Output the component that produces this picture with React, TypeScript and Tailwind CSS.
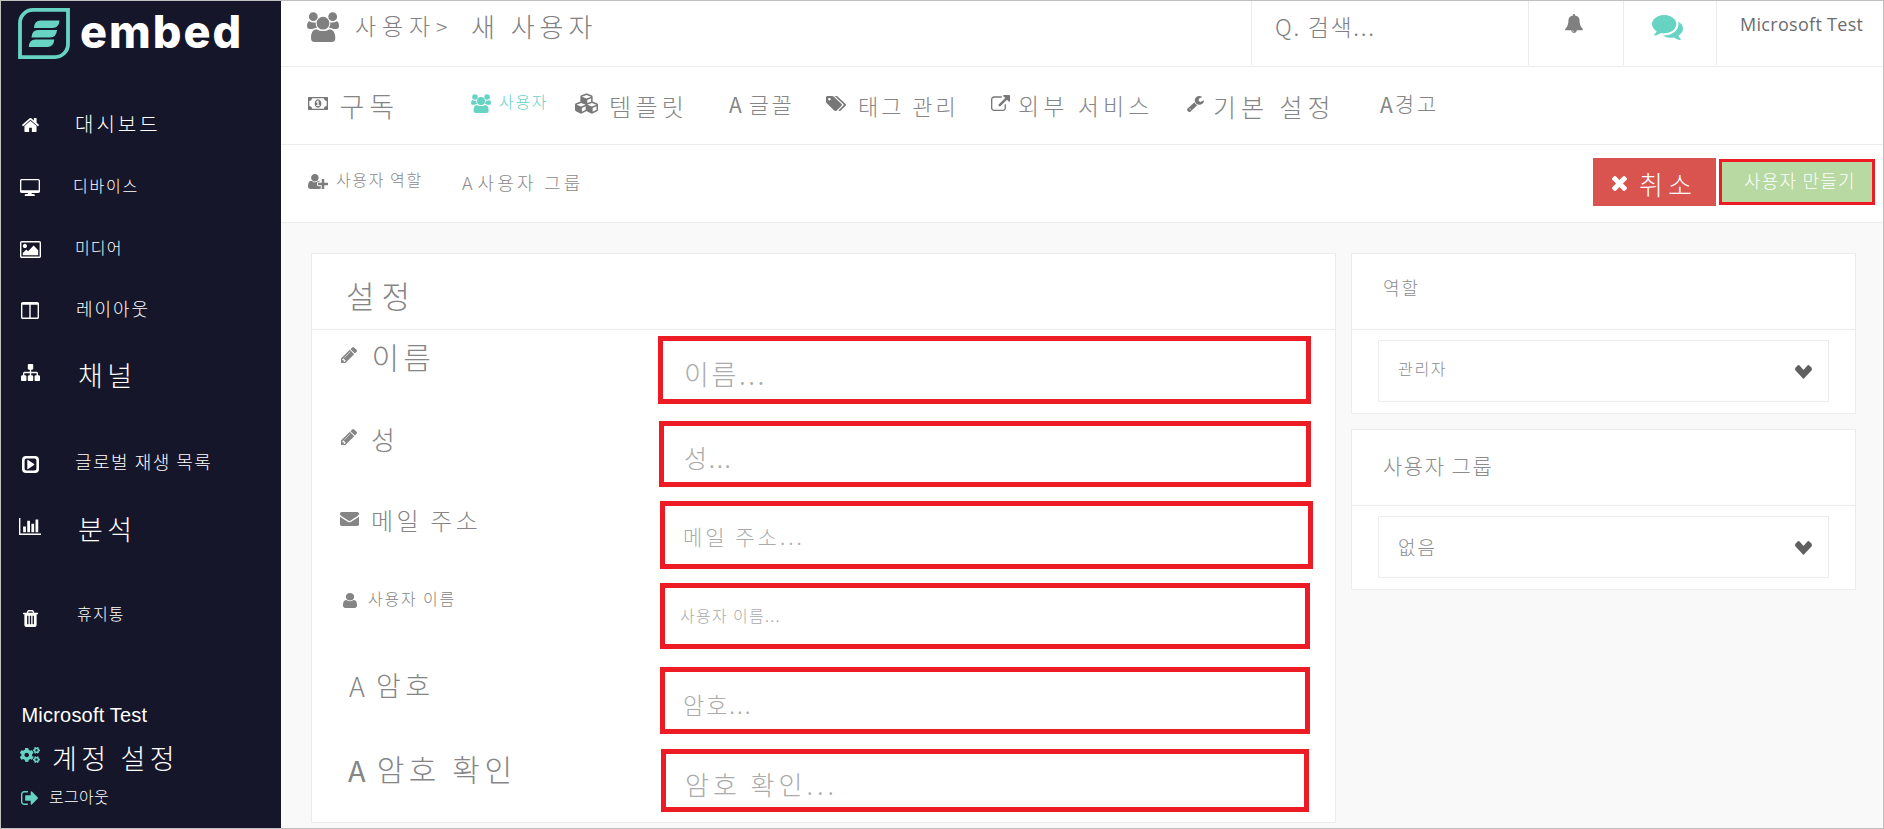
import React from "react";
import { FaCogs, FaCubes } from "react-icons/fa";

type Glyph = { box: string; d: string };

const glyphs: Record<string, Glyph> = {
  users: {
    box: "0 0 32 30",
    d: "M1.900 4.700a4.400 4.400 0 1 0 8.800 0a4.400 4.400 0 1 0-8.800 0zM21.300 4.700a4.400 4.400 0 1 0 8.800 0a4.400 4.400 0 1 0-8.800 0zM9.600 11.200a6.400 6.400 0 1 0 12.800 0a6.400 6.400 0 1 0-12.800 0zM2.500 9.300Q4 10.500 6.500 10.500T8.600 10.200Q8.300 13.500 10 15.800Q7 16.100 5.500 17H2.300Q0 16.800 0 14.500Q0 9.800 2.500 9.300zM29.500 9.300Q28 10.500 25.500 10.500T23.400 10.200Q23.700 13.500 22 15.800Q25 16.100 26.500 17H29.700Q32 16.800 32 14.500Q32 9.800 29.500 9.300zM9.500 17.200Q12.500 19.100 16 19.100T22.500 17.200Q28.300 17.500 28.300 26.500Q28.200 30 24.500 30H7.700Q4.200 30 4 26.500Q3.800 17.500 9.500 17.200z",
  },
  home: {
    box: "89 253 1614 1283",
    d: "M1472 992v480q0 26-19 45t-45 19h-384v-384h-256v384h-384q-26 0-45-19t-19-45v-480q0-1 .5-3t.5-3l575-474 575 474q1 2 1 6zm223-69l-62 74q-8 9-21 11h-3q-13 0-21-7l-692-577-692 577q-12 8-24 7-13-2-21-11l-62-74q-8-10-7-23.5t11-21.5l719-599q32-26 76-26t76 26l244 204v-195q0-14 9-23t23-9h192q14 0 23 9t9 23v408l219 182q10 8 11 21.5t-7 23.5z",
  },
  desktop: {
    box: "-64 0 1920 1664",
    d: "M1728 1070v-910q0-13-9.5-22.5t-22.5-9.5h-1600q-13 0-22.5 9.5t-9.5 22.5v910q0 13 9.5 22.5t22.5 9.5h1600q13 0 22.5-9.5t9.5-22.5zm128-910v1040q0 66-47 113t-113 47h-640v120h190q60 0 90 30t30 64-19 64-45 26h-856q-26 0-45-26t-19-64 30-64 90-30h190v-120h-606q-66 0-113-47t-47-113v-1040q0-66 47-113t113-47h1600q66 0 113 47t47 113z",
  },
  picture: {
    box: "-64 128 1920 1536",
    d: "M576 576q0 80-56 136t-136 56-136-56-56-136 56-136 136-56 136 56 56 136zm1024 384v448h-1408v-192l320-320 160 160 512-512zm96-704h-1600q-13 0-22.5 9.5t-9.5 22.5v1216q0 13 9.5 22.5t22.5 9.5h1600q13 0 22.5-9.5t9.5-22.5v-1216q0-13-9.5-22.5t-22.5-9.5zm160 32v1216q0 66-47 113t-113 47h-1600q-66 0-113-47t-47-113v-1216q0-66 47-113t113-47h1600q66 0 113 47t47 113z",
  },
  columns: {
    box: "0 0 1664 1536",
    d: "M160 1408h608v-1152h-640v1120q0 13 9.5 22.5t22.5 9.5zm1376-32v-1120h-640v1152h608q13 0 22.5-9.5t9.5-22.5zm128-1216v1216q0 66-47 113t-113 47h-1344q-66 0-113-47t-47-113v-1216q0-66 47-113t113-47h1344q66 0 113 47t47 113z",
  },
  sitemap: {
    box: "0 128 1792 1536",
    d: "M1792 1248v320q0 40-28 68t-68 28h-320q-40 0-68-28t-28-68v-320q0-40 28-68t68-28h96v-192h-512v192h96q40 0 68 28t28 68v320q0 40-28 68t-68 28h-320q-40 0-68-28t-28-68v-320q0-40 28-68t68-28h96v-192h-512v192h96q40 0 68 28t28 68v320q0 40-28 68t-68 28h-320q-40 0-68-28t-28-68v-320q0-40 28-68t68-28h96v-192q0-52 38-90t90-38h512v-192h-96q-40 0-68-28t-28-68v-320q0-40 28-68t68-28h320q40 0 68 28t28 68v320q0 40-28 68t-68 28h-96v192h512q52 0 90 38t38 90v192h96q40 0 68 28t28 68z",
  },
  play: {
    box: "0 0 17 17",
    d: "M4 0h9a4 4 0 0 1 4 4v9a4 4 0 0 1-4 4H4a4 4 0 0 1-4-4V4a4 4 0 0 1 4-4zm.5 2.6A1.9 1.9 0 0 0 2.6 4.5v8a1.9 1.9 0 0 0 1.9 1.9h8a1.9 1.9 0 0 0 1.9-1.9v-8a1.9 1.9 0 0 0-1.9-1.9zM5.3 4.2q0-.7.8-.3l6 4q.7.6 0 1.2l-6 4q-.8.4-.8-.3z",
  },
  chart: {
    box: "0 128 2048 1536",
    d: "M640 896v512h-256v-512h256zm384-512v1024h-256v-1024h256zm1024 1152v128h-2048v-1536h128v1408h1920zm-640-896v768h-256v-768h256zm384-384v1152h-256v-1152h256z",
  },
  trash: {
    box: "192 128 1408 1536",
    d: "M704 1376v-704q0-14-9-23t-23-9h-64q-14 0-23 9t-9 23v704q0 14 9 23t23 9h64q14 0 23-9t9-23zm256 0v-704q0-14-9-23t-23-9h-64q-14 0-23 9t-9 23v704q0 14 9 23t23 9h64q14 0 23-9t9-23zm256 0v-704q0-14-9-23t-23-9h-64q-14 0-23 9t-9 23v704q0 14 9 23t23 9h64q14 0 23-9t9-23zm-544-992h448l-48-117q-7-9-17-11h-317q-10 2-17 11zm928 32v64q0 14-9 23t-23 9h-96v948q0 83-47 143.5t-113 60.5h-832q-66 0-113-58.5t-47-141.5v-952h-96q-14 0-23-9t-9-23v-64q0-14 9-23t23-9h309l70-167q15-37 54-63t79-26h320q40 0 79 26t54 63l70 167h309q14 0 23 9t9 23z",
  },
  signout: {
    box: "64 256 1568 1280",
    d: "M704 1440q0 4 1 20t.5 26.5-3 23.5-10 19.5-20.5 6.5h-320q-119 0-203.5-84.5t-84.5-203.5v-704q0-119 84.5-203.5t203.5-84.5h320q13 0 22.5 9.5t9.5 22.5q0 4 1 20t.5 26.5-3 23.5-10 19.5-20.5 6.5h-320q-66 0-113 47t-47 113v704q0 66 47 113t113 47h312l11.5 1 11.5 3 8 5.5 7 9 2 13.5zm928-544q0 26-19 45l-544 544q-19 19-45 19t-45-19-19-45v-288h-448q-26 0-45-19t-19-45v-384q0-26 19-45t45-19h448v-288q0-26 19-45t45-19 45 19l544 544q19 19 19 45z",
  },
  money: {
    box: "0 256 1920 1280",
    d: "M768 1152h384v-96h-128v-448h-114l-148 137 77 80q42-37 55-57h2v288h-128v96zm512-256q0 70-21 142t-59.5 134-101.5 101-138 39-138-39-101.5-101-59.5-134-21-142 21-142 59.5-134 101.5-101 138-39 138 39 101.5 101 59.5 134 21 142zm512 256v-512q-106 0-181-75t-75-181h-1152q0 106-75 181t-181 75v512q106 0 181 75t75 181h1152q0-106 75-181t181-75zm128-832v1152q0 26-19 45t-45 19h-1792q-26 0-45-19t-19-45v-1152q0-26 19-45t45-19h1792q26 0 45 19t19 45z",
  },
  tags: {
    box: "0 128 1899 1515",
    d: "M448 448q0-53-37.5-90.5t-90.5-37.5-90.5 37.5-37.5 90.5 37.5 90.5 90.5 37.5 90.5-37.5 37.5-90.5zm1067 576q0 53-37 90l-491 492q-39 37-91 37-53 0-90-37l-715-716q-38-37-64.5-101t-26.5-117v-416q0-52 38-90t90-38h416q53 0 117 26.5t102 64.5l715 714q37 39 37 91zm384 0q0 53-37 90l-491 492q-39 37-91 37-36 0-59-14t-53-45l470-470q37-37 37-90 0-52-37-91l-715-714q-38-38-102-64.5t-117-26.5h224q53 0 117 26.5t102 64.5l715 714q37 39 37 91z",
  },
  external: {
    box: "0 0 1792 1536",
    d: "M1408 928v320q0 119-84.5 203.5t-203.5 84.5h-832q-119 0-203.5-84.5t-84.5-203.5v-832q0-119 84.5-203.5t203.5-84.5h704q14 0 23 9t9 23v64q0 14-9 23t-23 9h-704q-66 0-113 47t-47 113v832q0 66 47 113t113 47h832q66 0 113-47t47-113v-320q0-14 9-23t23-9h64q14 0 23 9t9 23zm384-864v512q0 26-19 45t-45 19-45-19l-176-176-652 652q-10 10-23 10t-23-10l-114-114q-10-10-10-23t10-23l652-652-176-176q-19-19-19-45t19-45 45-19h512q26 0 45 19t19 45z",
  },
  wrench: {
    box: "85 128 1641 1643",
    d: "M448 1472q0-26-19-45t-45-19-45 19-19 45 19 45 45 19 45-19 19-45zm644-420l-682 682q-37 37-90 37-52 0-91-37l-106-108q-38-36-38-90 0-53 38-91l681-681q39 98 114.5 173.5t173.5 114.5zm634-435q0 39-23 106-47 134-164.5 217.5t-258.5 83.5q-185 0-316.5-131.5t-131.5-316.5 131.5-316.5 316.5-131.5q58 0 121.5 16.5t107.5 46.5q16 11 16 28t-16 28l-293 169v224l193 107q5-3 79-48.5t135.5-81 70.5-35.5q15 0 23.5 10t8.5 25z",
  },
  userPlus: {
    box: "0 128 2048 1536",
    d: "M704 896q-159 0-271.5-112.5t-112.5-271.5 112.5-271.5 271.5-112.5 271.5 112.5 112.5 271.5-112.5 271.5-271.5 112.5zm960 128h352q13 0 22.5 9.5t9.5 22.5v192q0 13-9.5 22.5t-22.5 9.5h-352v352q0 13-9.5 22.5t-22.5 9.5h-192q-13 0-22.5-9.5t-9.5-22.5v-352h-352q-13 0-22.5-9.5t-9.5-22.5v-192q0-13 9.5-22.5t22.5-9.5h352v-352q0-13 9.5-22.5t22.5-9.5h192q13 0 22.5 9.5t9.5 22.5v352zm-736 224q0 52 38 90t90 38h256v238q-68 50-171 50h-874q-121 0-194-69t-73-190q0-53 3.5-103.5t14-109 26.5-108.5 43-97.5 62-81 85.5-53.5 111.5-20q19 0 39 17 79 61 154.5 91.5t164.5 30.5 164.5-30.5 154.5-91.5q20-17 39-17 132 0 217 96h-223q-52 0-90 38t-38 90v192z",
  },
  times: {
    box: "302 366 1188 1188",
    d: "M1490 1322q0 40-28 68l-136 136q-28 28-68 28t-68-28l-294-294-294 294q-28 28-68 28t-68-28l-136-136q-28-28-28-68t28-68l294-294-294-294q-28-28-28-68t28-68l136-136q28-28 68-28t68 28l294 294 294-294q28-28 68-28t68 28l136 136q28 28 28 68t-28 68l-294 294 294 294q28 28 28 68z",
  },
  bell: {
    box: "64 0 1664 1792",
    d: "M912 1696q0-16-16-16-59 0-101.5-42.5t-42.5-101.5q0-16-16-16t-16 16q0 73 51.5 124.5t124.5 51.5q16 0 16-16zm816-288q0 52-38 90t-90 38h-448q0 106-75 181t-181 75-181-75-75-181h-448q-52 0-90-38t-38-90q50-42 91-88t85-119.5 74.5-158.5 50-206 19.5-260q0-152 117-282.5t307-158.5q-8-19-8-39 0-40 28-68t68-28 68 28 28 68q0 20-8 39 190 28 307 158.5t117 282.5q0 139 19.5 260t50 206 74.5 158.5 85 119.5 91 88z",
  },
  comments: {
    box: "0 256 1792 1408",
    d: "M1408 768q0 139-94 257t-256.5 186.5-353.5 68.5q-86 0-176-16-124 88-278 128-36 9-86 16h-3q-11 0-20.5-8t-11.5-21q-1-3-1-6.5t.5-6.5 2-6l2.5-5 3.5-5.5 4-5 4.5-5 4-4.5q5-6 23-25t26-29.5 22.5-29 25-38.5 20.5-44q-124-72-195-177t-71-224q0-139 94-257t256.5-186.5 353.5-68.5 353.5 68.5 256.5 186.5 94 257zm384 256q0 120-71 224.5t-195 176.5q10 24 20.5 44t25 38.5 22.5 29 26 29.5 23 25q1 1 4 4.5t4.5 5 4 5 3.5 5.5l2.5 5 2 6 .5 6.5-1 6.5q-3 14-13 22t-22 7q-50-7-86-16-154-40-278-128-90 16-176 16-271 0-472-132 58 4 88 4 161 0 309-45t264-129q125-92 192-212t67-254q0-77-23-152 129 71 204 178t75 230z",
  },
  pencil: {
    box: "128 149 1515 1515",
    d: "M491 1536l91-91-235-235-91 91v107h128v128h107zm523-928q0-22-22-22-10 0-17 7l-542 542q-7 7-7 17 0 22 22 22 10 0 17-7l542-542q7-7 7-17zm-54-192l416 416-832 832h-416v-416zm683 96q0 53-37 90l-166 166-416-416 166-165q36-38 90-38 53 0 91 38l235 234q37 39 37 91z",
  },
  envelope: {
    box: "0 256 1792 1408",
    d: "M1792 710v794q0 66-47 113t-113 47h-1472q-66 0-113-47t-47-113v-794q44 49 101 87 362 246 497 345 57 42 92.5 65.5t94.5 48 110 24.5h2q51 0 110-24.5t94.5-48 92.5-65.5q170-123 498-345 57-39 100-87zm0-294q0 79-49 151t-122 123q-376 261-468 325-10 7-42.5 31t-54 38.5-52 32.5-57.5 27-50 9h-2q-23 0-50-9t-57.5-27-52-32.5-54-38.5-42.5-31q-91-64-262-182.5t-205-142.5q-62-42-117-115.5t-55-136.5q0-78 41.5-130t118.5-52h1472q65 0 112.5 47t47.5 113z",
  },
  user: {
    box: "256 128 1280 1536",
    d: "M1536 1399q0 109-62.5 187t-150.5 78h-854q-88 0-150.5-78t-62.5-187q0-85 8.5-160.5t31.5-152 58.5-131 94-89 134.5-34.5q131 128 313 128t313-128q76 0 134.5 34.5t94 89 58.5 131 31.5 152 8.5 160.5zm-256-887q0 159-112.5 271.5t-271.5 112.5-271.5-112.5-112.5-271.5 112.5-271.5 271.5-112.5 271.5 112.5 112.5 271.5z",
  },
  chevron: {
    box: "0 0 17 14",
    d: "M.6 2.400 2.600.4Q3.600-.3 4.600.5L8.500 4.900 12.400.5Q13.400-.3 14.400.4L16.400 2.400Q17.300 3.500 16.700 5.200L8.500 14 .3 5.200Q-.3 3.500.6 2.400z",
  },
};

function Icon({ name, className }: { name: string; className: string }) {
  const g = glyphs[name];
  return (
    <svg viewBox={g.box} preserveAspectRatio="none" fill="currentColor" fillRule={name === "play" ? "evenodd" : "nonzero"} className={`block shrink-0 ${className}`}>
      <path d={g.d} />
    </svg>
  );
}

function Text({ className, children }: { className: string; children: React.ReactNode }) {
  return <span className={`block shrink-0 whitespace-pre leading-none ${className}`}>{children}</span>;
}

const menu = [
  { label: "대시보드", icon: "home", row: "h-[62px]", slot: "w-[54px] pl-[21px] pt-[18px]", size: "w-[17px] h-[14px]", text: "mt-[14px] ml-[20px] text-[20px] tracking-[3px]" },
  { label: "디바이스", icon: "desktop", row: "h-[62px]", slot: "w-[54px] pl-[19px] pt-[17px]", size: "w-[20px] h-[17px]", text: "mt-[15px] ml-[18px] text-[16px] tracking-[1.8px]" },
  { label: "미디어", icon: "picture", row: "h-[62px]", slot: "w-[54px] pl-[19px] pt-[17px]", size: "w-[21px] h-[17px]", text: "mt-[15px] ml-[20px] text-[16px] tracking-[1.1px]" },
  { label: "레이아웃", icon: "columns", row: "h-[62px]", slot: "w-[54px] pl-[20px] pt-[16px]", size: "w-[18px] h-[17px]", text: "mt-[13px] ml-[21px] text-[18px] tracking-[1.9px]" },
  { label: "채널", icon: "sitemap", row: "h-[90px]", slot: "w-[54px] pl-[20px] pt-[16px]", size: "w-[19px] h-[17px]", text: "mt-[13px] ml-[23px] text-[27px] tracking-[4.5px]" },
  { label: "글로벌 재생 목록", icon: "play", row: "h-[62px]", slot: "w-[54px] pl-[21px] pt-[18px]", size: "w-[17px] h-[17px]", text: "mt-[14px] ml-[20px] text-[18px] tracking-[1.5px]" },
  { label: "분석", icon: "chart", row: "h-[92px]", slot: "w-[54px] pl-[18px] pt-[18px]", size: "w-[22px] h-[17px]", text: "mt-[15px] ml-[23px] text-[27px] tracking-[4.5px]" },
  { label: "휴지통", icon: "trash", row: "h-[62px]", slot: "w-[54px] pl-[22px] pt-[18px]", size: "w-[15px] h-[17px]", text: "mt-[13px] ml-[22px] text-[16px] tracking-[1.2px]" },
];

function Sidebar() {
  return (
    <aside className="flex w-[280px] shrink-0 flex-col bg-[#151629] text-white">
      <div className="flex h-[99px] shrink-0 items-start pl-[17px] pt-[7px]">
        <svg viewBox="0 0 52 52" className="block h-[51px] w-[52px] shrink-0" preserveAspectRatio="none">
          <path d="M15 2H50V37A13 13 0 0 1 37 50H2V15A13 13 0 0 1 15 2Z" fill="none" stroke="#66d3c3" strokeWidth="3.800" />
          <path d="M22.500 12.800H41.500Q41 20.300 34.500 20.300H16Q16.500 12.800 22.500 12.800zM20 22.500H39Q38.500 30 32 30H13.500Q14 22.500 20 22.500zM17.300 32.200H36.300Q35.800 39.700 29.300 39.700H10.800Q11.300 32.200 17.300 32.200z" fill="#66d3c3" />
        </svg>
        <Text className="ml-[10px] mt-[1px] font-['Inter',sans-serif] text-[45px] font-extrabold tracking-[2px]">embed</Text>
      </div>
      <nav className="flex flex-col">
        {menu.map((m) => (
          <div key={m.label} className={`flex items-start ${m.row}`}>
            <div className={`shrink-0 ${m.slot}`}>
              <Icon name={m.icon} className={m.size} />
            </div>
            <Text className={m.text}>{m.label}</Text>
          </div>
        ))}
      </nav>
      <div className="flex flex-col pt-[51px]">
        <Text className="ml-[20.500px] font-['Liberation_Sans',sans-serif] text-[20px] font-normal tracking-[0.2px]">Microsoft Test</Text>
        <div className="mt-[19px] flex h-[43px] items-start pl-[19px]">
          <FaCogs className="mt-px h-[20px] w-[20px] shrink-0 text-[#66d3c3]" />
          <Text className="ml-[12px] text-[27px] tracking-[4.300px]">계정 설정</Text>
        </div>
        <div className="mt-px flex items-start pl-[20px]">
          <Icon name="signout" className="mt-[3px] h-[14px] w-[17px] text-[#66d3c3]" />
          <Text className="ml-[11px] text-[16px] tracking-[0.3px]">로그아웃</Text>
        </div>
      </div>
    </aside>
  );
}

function TopBar() {
  return (
    <header className="flex h-[66px] shrink-0 items-start border-b border-[#ececec] text-[#808080]">
      <Icon name="users" className="ml-[26px] mt-[11px] h-[30px] w-[32px]" />
      <div className="ml-[16px] w-[81px]">
        <Text className="mt-[13px] text-[23px] tracking-[5.9px]">사용자</Text>
      </div>
      <div className="w-[35px]">
        <Text className="mt-[15px] text-[21px]">{">"}</Text>
      </div>
      <Text className="mt-[12px] text-[26px] tracking-[5px]">새 사용자</Text>
      <div className="ml-auto flex h-[64px] items-start">
        <div className="h-full w-[277px] border-l border-[#ececec] pl-[23px]">
          <Text className="mt-[14px] text-[23px] tracking-[1.7px]">Q. 검색...</Text>
        </div>
        <div className="h-full w-[95px] border-l border-[#ececec] pl-[36px] pt-[13px]">
          <Icon name="bell" className="h-[19px] w-[18px]" />
        </div>
        <div className="h-full w-[93px] border-l border-[#ececec] pl-[28px] pt-[14px] text-[#66d3c3]">
          <Icon name="comments" className="h-[25px] w-[31px]" />
        </div>
        <div className="h-full w-[167px] border-l border-[#ececec] pl-[23px]">
          <Text className="mt-[14px] font-['Open_Sans',sans-serif] text-[18px] font-medium tracking-[0.3px] text-[#6c6c6c]">Microsoft Test</Text>
        </div>
      </div>
    </header>
  );
}

function TabBar() {
  return (
    <nav className="flex h-[78px] shrink-0 items-start border-b border-[#ececec] pl-[27px] text-[#858585]">
      <div className="flex w-[163px] items-start">
        <Icon name="money" className="mt-[30px] h-[13px] w-[20px] text-[#777777]" />
        <Text className="ml-[11.500px] mt-[25px] text-[27px] tracking-[5px]">구독</Text>
      </div>
      <div className="flex w-[104px] items-start text-[#66d3c3]">
        <Icon name="users" className="mt-[27px] h-[19px] w-[20px]" />
        <Text className="ml-[8px] mt-[26px] text-[16px] tracking-[1.7px]">사용자</Text>
      </div>
      <div className="flex w-[154px] items-start">
        <FaCubes className="mt-[25px] h-[23px] w-[23px] shrink-0 text-[#777777]" />
        <Text className="ml-[11px] mt-[27px] text-[24px] tracking-[4.3px]">템플릿</Text>
      </div>
      <div className="flex w-[97px] items-start">
        <Text className="mt-[27px] text-[21px] font-normal">A</Text>
        <Text className="ml-[7px] mt-[25px] text-[22px] tracking-[2.500px]">글꼴</Text>
      </div>
      <div className="flex w-[165px] items-start">
        <Icon name="tags" className="mt-[29px] h-[15px] w-[20px] text-[#777777]" />
        <Text className="ml-[12px] mt-[27px] text-[22px] tracking-[3px]">태그 관리</Text>
      </div>
      <div className="flex w-[197px] items-start">
        <Icon name="external" className="mt-[28px] h-[16px] w-[19px] text-[#777777]" />
        <Text className="ml-[8px] mt-[27px] text-[23px] tracking-[4.1px]">외부 서비스</Text>
      </div>
      <div className="flex w-[192px] items-start">
        <Icon name="wrench" className="-ml-px mt-[29px] h-[16px] w-[17px] text-[#777777]" />
        <Text className="ml-[9px] mt-[27px] text-[25px] tracking-[5px]">기본 설정</Text>
      </div>
      <div className="flex items-start">
        <Text className="mt-[27px] text-[21px] font-normal">A</Text>
        <Text className="ml-[2px] mt-[26px] text-[21px] tracking-[3px]">경고</Text>
      </div>
    </nav>
  );
}

function ActionBar() {
  return (
    <div className="flex h-[78px] shrink-0 items-start border-b border-[#ececec] pl-[27px] pr-[8px] text-[#8a8a8a]">
      <div className="flex w-[154px] items-start">
        <Icon name="userPlus" className="mt-[29px] h-[15px] w-[20px] text-[#7c7c7c]" />
        <Text className="ml-[8px] mt-[26px] text-[16px] tracking-[1.6px]">사용자 역할</Text>
      </div>
      <Text className="mt-[28px] text-[18px]">A</Text>
      <Text className="ml-[5px] mt-[28px] text-[18px] tracking-[3.2px]">사용자 그룹</Text>
      <button className="ml-auto mt-[13px] flex h-[48px] w-[123px] items-start bg-[#d9534f] pl-[19px] text-white">
        <Icon name="times" className="mt-[18px] h-[15px] w-[15px]" />
        <Text className="ml-[12px] mt-[13px] text-[26px] tracking-[5px]">취소</Text>
      </button>
      <button className="ml-[3px] mt-[14px] flex h-[46px] w-[156px] items-start border-[3px] border-[#ed1c24] bg-[#b8d9a1] pl-[22px] text-white">
        <Text className="mt-[9px] text-[18px] tracking-[1.2px]">사용자 만들기</Text>
      </button>
    </div>
  );
}

function FieldBox({ className, text, children }: { className: string; text: string; children: string }) {
  return (
    <div className={`shrink-0 border-[5px] border-[#ed1c24] text-[#aaaaaa] ${className}`}>
      <Text className={text}>{children}</Text>
    </div>
  );
}

function SettingsPanel() {
  return (
    <section className="flex h-[570px] w-[1025px] shrink-0 flex-col border border-[#ececec] bg-white text-[#858585]">
      <div className="h-[76px] shrink-0 border-b border-[#ececec] pl-[34px]">
        <Text className="mt-[25px] text-[31px] tracking-[7px]">설정</Text>
      </div>
      <div className="mt-[6px] flex items-start">
        <div className="flex w-[346px] items-start pl-[29px]">
          <Icon name="pencil" className="mt-[11px] h-[16px] w-[16px]" />
          <Text className="ml-[14.500px] mt-[5px] text-[30px] tracking-[4.200px]">이름</Text>
        </div>
        <FieldBox className="h-[68px] w-[653px]" text="mt-[19px] ml-[21px] text-[27px] tracking-[2.600px]">이름...</FieldBox>
      </div>
      <div className="mt-[17px] flex items-start">
        <div className="flex w-[347px] items-start pl-[29px]">
          <Icon name="pencil" className="mt-[8px] h-[16px] w-[16px]" />
          <Text className="ml-[14px] mt-[5px] text-[26px]">성</Text>
        </div>
        <FieldBox className="h-[66px] w-[652px]" text="mt-[19px] ml-[20px] text-[25px] tracking-[1.700px]">성...</FieldBox>
      </div>
      <div className="mt-[14px] flex items-start">
        <div className="flex w-[348px] items-start pl-[28px]">
          <Icon name="envelope" className="mt-[11px] h-[14px] w-[19px]" />
          <Text className="ml-[12px] mt-[7px] text-[24px] tracking-[3.3px]">메일 주소</Text>
        </div>
        <FieldBox className="h-[68px] w-[653px]" text="mt-[20px] ml-[18px] text-[21px] tracking-[3px]">메일 주소...</FieldBox>
      </div>
      <div className="mt-[14px] flex items-start">
        <div className="flex w-[348px] items-start pl-[31px]">
          <Icon name="user" className="mt-[10px] h-[15px] w-[14px]" />
          <Text className="ml-[11px] mt-[7px] text-[16px] tracking-[1.8px]">사용자 이름</Text>
        </div>
        <FieldBox className="h-[66px] w-[650px]" text="mt-[19px] ml-[15px] text-[16px] tracking-[1.3px]">사용자 이름...</FieldBox>
      </div>
      <div className="mt-[18px] flex items-start">
        <div className="flex w-[348px] items-start pl-[37px]">
          <Text className="mt-[5px] text-[27px]">A</Text>
          <Text className="ml-[11px] mt-[4px] text-[27px] tracking-[4.500px]">암호</Text>
        </div>
        <FieldBox className="h-[67px] w-[650px]" text="mt-[21px] ml-[18px] text-[23px] tracking-[2px]">암호...</FieldBox>
      </div>
      <div className="mt-[15px] flex items-start">
        <div className="flex w-[349px] items-start pl-[36px]">
          <Text className="mt-[6px] text-[29px] font-normal">A</Text>
          <Text className="ml-[11px] mt-[4px] text-[30px] tracking-[4.600px]">암호 확인</Text>
        </div>
        <FieldBox className="h-[63px] w-[648px]" text="mt-[17px] ml-[19px] text-[26px] tracking-[4px]">암호 확인...</FieldBox>
      </div>
    </section>
  );
}

function SelectPanel({ title, titleClass, value, valueClass }: { title: string; titleClass: string; value: string; valueClass: string }) {
  return (
    <section className="flex h-[161px] w-[505px] flex-col border border-[#ececec] bg-white text-[#8c8c8c]">
      <div className="flex h-[76px] shrink-0 items-start border-b border-[#ececec] pl-[31px]">
        <Text className={titleClass}>{title}</Text>
      </div>
      <div className="ml-[26px] mt-[10px] flex h-[62px] w-[451px] items-start justify-between border border-[#ececec] pl-[19px] pr-[16px]">
        <Text className={valueClass}>{value}</Text>
        <Icon name="chevron" className="mt-[24px] h-[14px] w-[17px] text-[#606060]" />
      </div>
    </section>
  );
}

export default function App() {
  return (
    <div className="flex h-[829px] w-[1884px] overflow-hidden border border-[#c0c0c0] bg-white font-['Noto_Sans_CJK_KR',sans-serif] font-light">
      <Sidebar />
      <div className="flex min-w-0 grow flex-col">
        <TopBar />
        <TabBar />
        <ActionBar />
        <main className="flex grow items-start gap-[15px] bg-[#f9f9f9] pl-[30px] pt-[30px]">
          <SettingsPanel />
          <div className="flex flex-col gap-[15px]">
            <SelectPanel title="역할" titleClass="mt-[24px] text-[18px] tracking-[2px]" value="관리자" valueClass="mt-[19px] text-[16px] tracking-[1.7px]" />
            <SelectPanel title="사용자 그룹" titleClass="mt-[25px] text-[21px] tracking-[1.5px]" value="없음" valueClass="mt-[20px] text-[19px] tracking-[2px]" />
          </div>
        </main>
      </div>
    </div>
  );
}
